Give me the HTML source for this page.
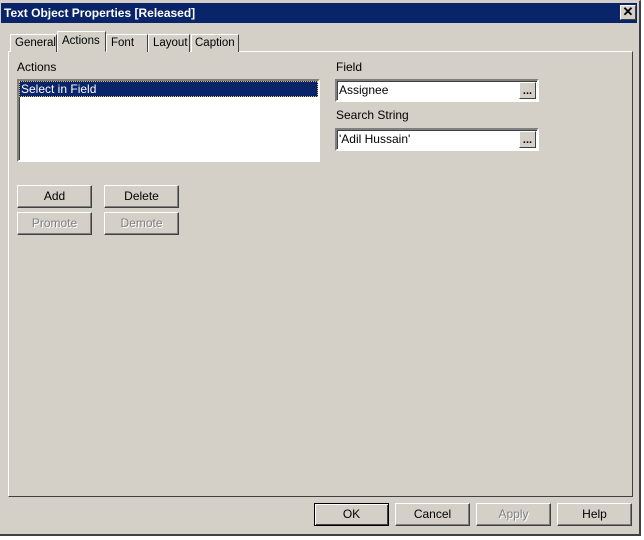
<!DOCTYPE html>
<html><head><style>
*{margin:0;padding:0;box-sizing:border-box}
body{width:644px;height:540px;background:#fff;position:relative;overflow:hidden;font-family:"Liberation Sans",sans-serif;font-size:12px;color:#000}
.a{position:absolute}
.win{left:0;top:0;width:641px;height:536px;background:#d4d0c8;border-right:2px solid #404040;border-bottom:2px solid #404040;border-top:1px solid #d4d0c8}
.title{left:1px;top:3px;width:636px;height:20px;background:#0a246a;color:#fff;font-weight:bold;font-size:12px;line-height:20px;padding-left:3px}
.close{left:620px;top:5px;width:16px;height:15px;background:#d4d0c8;border:1px solid;border-color:#fff #404040 #404040 #fff;font-size:13px;line-height:12px;text-align:center;font-weight:bold;color:#000}
.panel{left:8px;top:51px;width:625px;height:446px;border:1px solid;border-color:#fff #404040 #404040 #fff}
.tab{top:34px;height:18px;border:1px solid;border-bottom:none;border-color:#fff #404040 #404040 #fff;background:#d4d0c8;line-height:17px;padding-left:4px;font-size:11.5px;white-space:nowrap;overflow:hidden}
.btn{height:23px;border:1px solid;border-color:#fff #404040 #404040 #fff;box-shadow:inset -1px -1px 0 #808080;text-align:center;line-height:21px;font-size:12px;background:#d4d0c8}
.dis{color:#808080;text-shadow:1px 1px 0 #fff}
.inp{background:#fff;border:2px solid;border-color:#808080 #fff #fff #808080;box-shadow:inset 1px 1px 0 #404040;height:23px;width:204px;padding-left:2px;line-height:18px;font-size:12px}
.dots{position:absolute;right:1px;top:1px;width:17px;height:17px;background:#d4d0c8;border:1px solid;border-color:#fff #404040 #404040 #fff;font-size:11px;line-height:17px;text-align:center;font-weight:bold}
</style></head><body>
<div class="a win"></div>
<div class="a title">Text Object Properties [Released]</div>
<div class="a close">✕</div>
<div class="a panel"></div>
<div class="a tab" style="left:10px;width:47px">General</div>
<div class="a tab" style="left:106px;width:42px">Font</div>
<div class="a tab" style="left:148px;width:42px">Layout</div>
<div class="a tab" style="left:191px;width:48px;padding-left:3px">Caption</div>
<div class="a tab" style="left:57px;top:31px;height:21px;width:49px;padding-left:4px;line-height:18px;z-index:2;border-bottom:1px solid #d4d0c8">Actions</div>
<div class="a" style="left:17px;top:60px">Actions</div>
<div class="a" style="left:17px;top:79px;width:303px;height:83px;background:#fff;border:2px solid;border-color:#808080 #fff #fff #808080;box-shadow:inset 1px 1px 0 #404040"></div>
<div class="a" style="left:19px;top:81px;width:299px;height:16px;background:#0a246a;color:#fff;line-height:16px;padding-left:2px;outline:1px dotted #e0c060;outline-offset:-1px">Select in Field</div>
<div class="a btn" style="left:17px;top:185px;width:75px">Add</div>
<div class="a btn" style="left:104px;top:185px;width:75px">Delete</div>
<div class="a btn dis" style="left:17px;top:212px;width:75px">Promote</div>
<div class="a btn dis" style="left:104px;top:212px;width:75px">Demote</div>
<div class="a" style="left:336px;top:60px">Field</div>
<div class="a inp" style="left:335px;top:79px">Assignee<div class="dots">...</div></div>
<div class="a" style="left:336px;top:108px">Search String</div>
<div class="a inp" style="left:335px;top:128px">'Adil Hussain'<div class="dots">...</div></div>
<div class="a btn" style="left:314px;top:503px;width:75px;border:1px solid #000;box-shadow:inset 1px 1px 0 #fff,inset -1px -1px 0 #404040">OK</div>
<div class="a btn" style="left:395px;top:503px;width:75px">Cancel</div>
<div class="a btn dis" style="left:476px;top:503px;width:75px">Apply</div>
<div class="a btn" style="left:557px;top:503px;width:75px">Help</div>
</body></html>
